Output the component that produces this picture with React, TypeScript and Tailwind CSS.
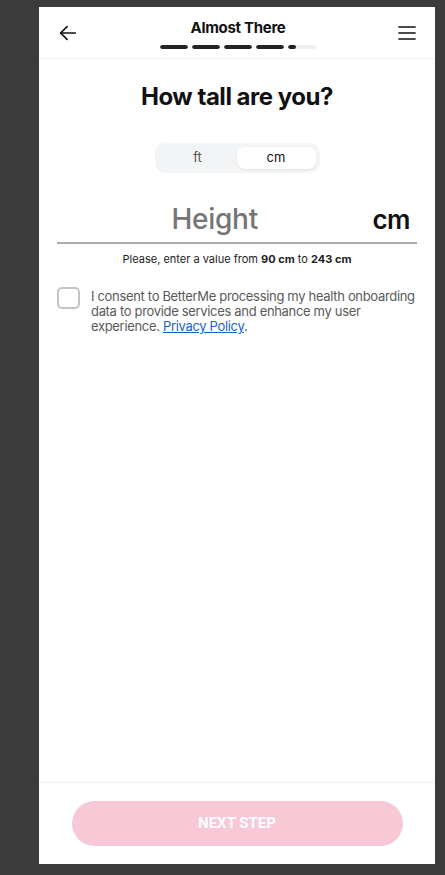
import React from "react";

const segments = [100, 100, 100, 100, 28];

export default function App() {
  return (
    <div className="min-h-screen w-[445px] bg-[#3b3b3b] pl-[39px] pt-[7px] pb-[11px]">
      <div
        className="flex h-[857px] w-[396px] flex-col bg-white"
        style={{ fontFamily: "Inter, 'Noto Sans', sans-serif" }}
      >
        <header className="flex h-[52px] items-center justify-between border-b border-[#f1f1f1] px-[18px]">
          <svg width="22" height="22" viewBox="0 0 24 24" fill="none" stroke="#111" strokeWidth="1.8" strokeLinecap="round" strokeLinejoin="round">
            <path d="M20 12H4" />
            <path d="M11 5l-7 7 7 7" />
          </svg>
          <div className="flex flex-col items-center pt-[2px]">
            <p className="text-[15px] font-bold leading-5 tracking-[-0.02em] text-[#111]">Almost There</p>
            <div className="mt-[7px] flex gap-[4px]">
              {segments.map((v, i) => (
                <div key={i} className="h-[4px] w-[28px] overflow-hidden rounded-full bg-[#f0f0f0]">
                  <div className="h-full rounded-full bg-[#222]" style={{ width: `${v}%` }} />
                </div>
              ))}
            </div>
          </div>
          <svg width="20" height="20" viewBox="0 0 20 20" fill="none" stroke="#111" strokeWidth="1.7" strokeLinecap="round">
            <path d="M2 4h16M2 10h16M2 16h16" />
          </svg>
        </header>

        <main className="flex flex-1 flex-col px-[18px]">
          <h1 className="mt-[22px] text-center text-[24px] font-bold leading-8 tracking-[-0.02em] text-[#111]">
            How tall are you?
          </h1>

          <div className="mt-[30px] flex justify-center">
            <div className="flex h-[30px] w-[165px] items-center rounded-[10px] bg-[#f3f4f6] p-[4px]">
              <button className="flex h-[22px] flex-1 items-center justify-center text-[13px] text-[#555]">ft</button>
              <button className="flex h-[22px] w-[79px] items-center justify-center rounded-[8px] bg-white text-[13px] text-[#111] shadow-[0_1px_2px_rgba(0,0,0,0.08)]">
                cm
              </button>
            </div>
          </div>

          <div className="mt-[23px] flex h-[48px] items-center border-b-2 border-[#acacac]">
            <span className="flex-1 text-center text-[28px] font-medium tracking-[-0.01em] text-[#757575]">
              Height
            </span>
            <span className="pr-[7px] text-[26px] font-semibold tracking-[-0.02em] text-[#111]">cm</span>
          </div>

          <p className="mt-[7px] text-center text-[11px] leading-4 text-[#222]">
            Please, enter a value from <b>90 cm</b> to <b>243 cm</b>
          </p>

          <label className="mt-[19px] flex gap-[11px]">
            <span className="mt-[1px] h-[22px] w-[23px] shrink-0 rounded-[5px] border-2 border-[#c4c4c4] bg-white" />
            <span className="pt-[3px] text-[13px] leading-[15px] tracking-[-0.025em] text-[#5a5a5a]">
              I consent to BetterMe processing my health onboarding data to provide services and enhance my user experience.{" "}
              <a className="text-[#1a5fd0] underline">Privacy Policy</a>.
            </span>
          </label>
        </main>

        <footer className="flex h-[82px] items-start justify-center border-t border-[#f1f1f1] pt-[18px]">
          <button
            className="h-[45px] w-[331px] rounded-full bg-[#f7c8d6] text-[15px] font-bold text-white"
            style={{ fontFamily: "Roboto, sans-serif" }}
          >
            NEXT STEP
          </button>
        </footer>
      </div>
    </div>
  );
}
